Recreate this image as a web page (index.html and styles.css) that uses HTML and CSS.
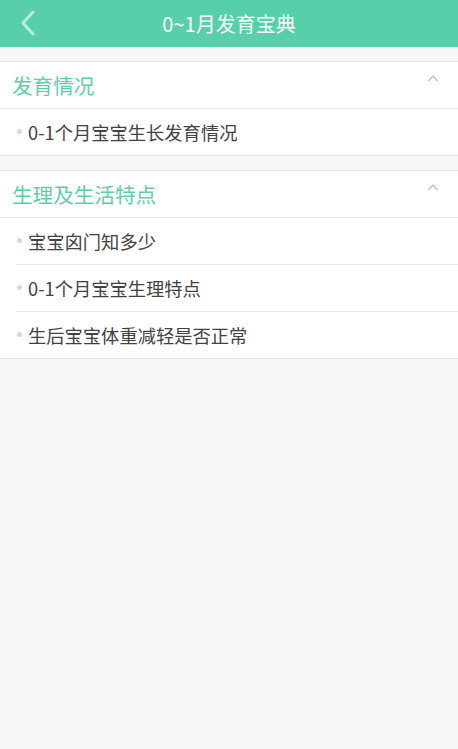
FILE: index.html
```html
<!DOCTYPE html>
<html>
<head>
    <meta charset="utf-8">
    <title>0~1月发育宝典</title>
    <link rel="stylesheet" href="styles.css">
</head>
<body>
    <div class="topbar">
        <span class="back">
            <svg width="16" height="26" viewBox="0 0 16 26"><path d="M13 2 L3 13 L13 24" fill="none" stroke="#fff" stroke-width="3" stroke-linecap="round" stroke-linejoin="round"/></svg>
        </span>
        <h1>0~1月发育宝典</h1>
    </div>

    <div class="section">
        <div class="section-head">
            <span class="section-title">发育情况</span>
            <svg class="caret" width="12" height="8" viewBox="0 0 12 8"><path d="M1.5 7 L6 2 L10.5 7" fill="none" stroke="#c4c4c4" stroke-width="1.5"/></svg>
        </div>
        <ul class="items">
            <li><span class="dot"></span>0-1个月宝宝生长发育情况</li>
        </ul>
    </div>

    <div class="section">
        <div class="section-head">
            <span class="section-title">生理及生活特点</span>
            <svg class="caret" width="12" height="8" viewBox="0 0 12 8"><path d="M1.5 7 L6 2 L10.5 7" fill="none" stroke="#c4c4c4" stroke-width="1.5"/></svg>
        </div>
        <ul class="items">
            <li><span class="dot"></span>宝宝囟门知多少</li>
            <li><span class="dot"></span>0-1个月宝宝生理特点</li>
            <li><span class="dot"></span>生后宝宝体重减轻是否正常</li>
        </ul>
    </div>
</body>
</html>
```

FILE: styles.css
```css
body {
    margin: 0;
    background-color: #f7f7f7;
    font-family: "Noto Sans CJK SC", "Noto Sans", sans-serif;
    min-height: 100vh;
}

.topbar {
    height: 47px;
    background-color: #56cfaa;
    display: flex;
    align-items: center;
    justify-content: center;
    position: relative;
    margin-bottom: 14px;
}

.topbar h1 {
    margin: 0;
    color: #fff;
    font-size: 20px;
    font-weight: 400;
    line-height: 1;
}

.back {
    position: absolute;
    left: 20px;
    top: 10px;
    opacity: 0.6;
    display: flex;
}

.section {
    background-color: #fff;
    border-top: 1px solid #e4e4e4;
    border-bottom: 1px solid #e4e4e4;
    margin-bottom: 14px;
}

.section-head {
    height: 46px;
    display: flex;
    align-items: center;
    justify-content: space-between;
    padding: 0 19px 0 12px;
    border-bottom: 1px solid #e8e8e8;
}

.section-title {
    color: #5ccfaa;
    font-size: 20.6px;
}

.caret {
    align-self: flex-start;
    margin-top: 12px;
}

.items {
    list-style: none;
    margin: 0;
    padding: 0 0 0 17px;
}

.items li {
    height: 46px;
    display: flex;
    align-items: center;
    color: #424242;
    font-size: 18.3px;
    border-bottom: 1px solid #e8e8e8;
}

.items li:last-child {
    border-bottom: none;
}

.dot {
    width: 5px;
    height: 5px;
    border-radius: 50%;
    background-color: #d6d6d6;
    margin-right: 6px;
    margin-top: -2px;
}
```
